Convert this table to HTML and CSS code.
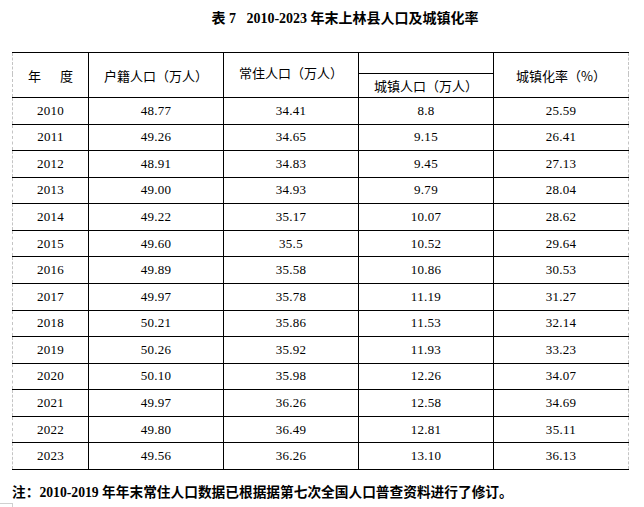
FILE: index.html
```html
<!DOCTYPE html>
<html lang="zh-CN">
<head>
<meta charset="utf-8">
<title>表7 2010-2023年末上林县人口及城镇化率</title>
<link rel="stylesheet" href="styles.css">
</head>
<body>
<div class="page">
  <div class="title">表 7&nbsp;&nbsp; 2010-2023 年末上林县人口及城镇化率</div>
  <table class="data">
    <colgroup>
      <col class="c1"><col class="c2"><col class="c3"><col class="c4"><col class="c5">
    </colgroup>
    <thead>
      <tr class="h1">
        <th rowspan="2" class="first">年<span class="gap"></span>度</th>
        <th rowspan="2">户籍人口（万人）</th>
        <th rowspan="2" class="up">常住人口（万人）</th>
        <th class="blank"></th>
        <th rowspan="2" class="last">城镇化率（%）</th>
      </tr>
      <tr class="h2">
        <th>城镇人口（万人）</th>
      </tr>
    </thead>
    <tbody>
      <tr><td class="first">2010</td><td>48.77</td><td>34.41</td><td>8.8</td><td class="last">25.59</td></tr>
      <tr><td class="first">2011</td><td>49.26</td><td>34.65</td><td>9.15</td><td class="last">26.41</td></tr>
      <tr><td class="first">2012</td><td>48.91</td><td>34.83</td><td>9.45</td><td class="last">27.13</td></tr>
      <tr><td class="first">2013</td><td>49.00</td><td>34.93</td><td>9.79</td><td class="last">28.04</td></tr>
      <tr><td class="first">2014</td><td>49.22</td><td>35.17</td><td>10.07</td><td class="last">28.62</td></tr>
      <tr><td class="first">2015</td><td>49.60</td><td>35.5</td><td>10.52</td><td class="last">29.64</td></tr>
      <tr><td class="first">2016</td><td>49.89</td><td>35.58</td><td>10.86</td><td class="last">30.53</td></tr>
      <tr><td class="first">2017</td><td>49.97</td><td>35.78</td><td>11.19</td><td class="last">31.27</td></tr>
      <tr><td class="first">2018</td><td>50.21</td><td>35.86</td><td>11.53</td><td class="last">32.14</td></tr>
      <tr><td class="first">2019</td><td>50.26</td><td>35.92</td><td>11.93</td><td class="last">33.23</td></tr>
      <tr><td class="first">2020</td><td>50.10</td><td>35.98</td><td>12.26</td><td class="last">34.07</td></tr>
      <tr><td class="first">2021</td><td>49.97</td><td>36.26</td><td>12.58</td><td class="last">34.69</td></tr>
      <tr><td class="first">2022</td><td>49.80</td><td>36.49</td><td>12.81</td><td class="last">35.11</td></tr>
      <tr><td class="first">2023</td><td>49.56</td><td>36.26</td><td>13.10</td><td class="last">36.13</td></tr>
    </tbody>
  </table>
  <div class="note">注：2010-2019 年年末常住人口数据已根据据第七次全国人口普查资料进行了修订。</div>
  <div class="corner"></div>
</div>
</body>
</html>
```
FILE: styles.css
```css
html, body {
  margin: 0;
  padding: 0;
  background: #ffffff;
}

.page {
  width: 644px;
  height: 507px;
  overflow: hidden;
  color: #000000;
  font-family: "Liberation Serif", "Noto Sans CJK SC", serif;
}

.title {
  padding: 9px 0 23px 46px;
  line-height: 20px;
  font-size: 14px;
  font-weight: bold;
  text-align: center;
}

.data {
  margin-left: 12px;
  border-collapse: collapse;
  table-layout: fixed;
  width: 616px;
  font-size: 13px;
}

.c1 { width: 76px; }
.c2 { width: 135px; }
.c3 { width: 135px; }
.c4 { width: 135px; }
.c5 { width: 135px; }

.data th,
.data td {
  border: 1px solid #000000;
  padding: 0;
  text-align: center;
  vertical-align: middle;
  white-space: nowrap;
}

.data td {
  letter-spacing: 0.3px;
}

.data th {
  font-weight: normal;
  font-size: 13px;
  font-family: "Noto Sans CJK SC", sans-serif;
}

.data .first {
  border-left: 1px dashed #c4c4c4;
}

.data .last {
  border-right: 1px dashed #c4c4c4;
}

.data .blank {
  border-left: 1px dashed #c4c4c4;
}

.gap {
  display: inline-block;
  width: 19px;
}

.h1 { height: 21px; }
.h2 { height: 24px; }

.data th.up {
  padding-bottom: 5px;
}

.data tbody tr {
  height: 26.57px;
}

.note {
  margin-top: 13px;
  padding-left: 12px;
  line-height: 20px;
  font-size: 13.7px;
  font-weight: bold;
}

.corner {
  margin-top: 0;
  width: 12px;
  height: 8px;
  border-top: 1px solid #d0d0d0;
  border-right: 1px solid #d0d0d0;
}
```
